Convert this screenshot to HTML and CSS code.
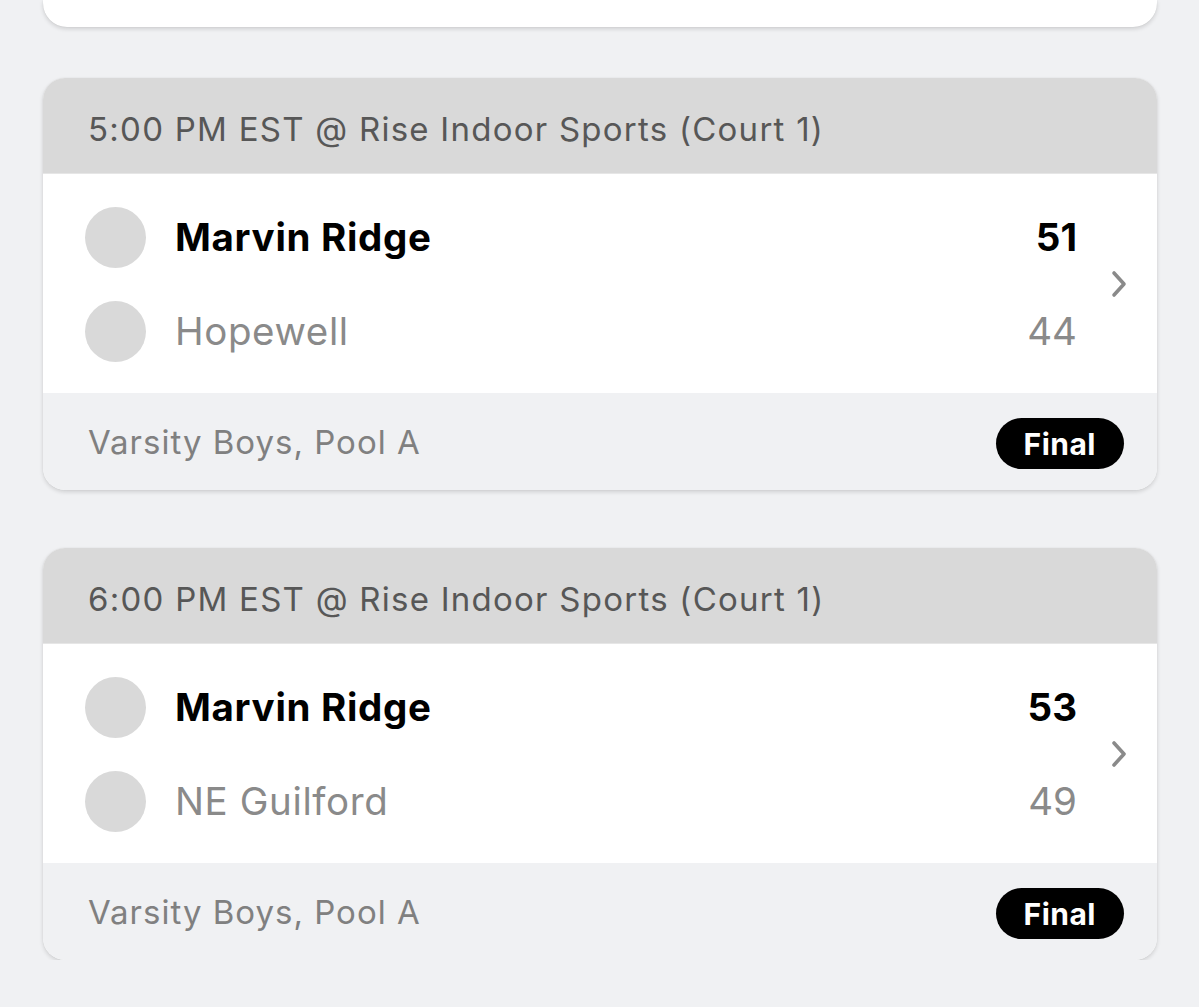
FILE: index.html
```html
<!DOCTYPE html>
<html>
<head>
<meta charset="utf-8">
<link rel="stylesheet" href="styles.css">
</head>
<body>
<div class="list">
  <div class="card card-prev"></div>

  <div class="card">
    <div class="card-head">5:00 PM EST @ Rise Indoor Sports (Court 1)</div>
    <div class="card-body">
      <div class="teams">
        <div class="team win">
          <span class="logo"></span>
          <span class="name">Marvin Ridge</span>
          <span class="score">51</span>
        </div>
        <div class="team">
          <span class="logo"></span>
          <span class="name">Hopewell</span>
          <span class="score">44</span>
        </div>
      </div>
      <svg class="chev" width="20" height="28" viewBox="0 0 20 28"><path d="M5 3 L15 14 L5 25" fill="none" stroke="#8a8a8a" stroke-width="3.6" stroke-linecap="round" stroke-linejoin="round"/></svg>
    </div>
    <div class="card-foot">
      <span class="division">Varsity Boys, Pool A</span>
      <span class="badge">Final</span>
    </div>
  </div>

  <div class="card">
    <div class="card-head">6:00 PM EST @ Rise Indoor Sports (Court 1)</div>
    <div class="card-body">
      <div class="teams">
        <div class="team win">
          <span class="logo"></span>
          <span class="name">Marvin Ridge</span>
          <span class="score">53</span>
        </div>
        <div class="team">
          <span class="logo"></span>
          <span class="name">NE Guilford</span>
          <span class="score">49</span>
        </div>
      </div>
      <svg class="chev" width="20" height="28" viewBox="0 0 20 28"><path d="M5 3 L15 14 L5 25" fill="none" stroke="#8a8a8a" stroke-width="3.6" stroke-linecap="round" stroke-linejoin="round"/></svg>
    </div>
    <div class="card-foot">
      <span class="division">Varsity Boys, Pool A</span>
      <span class="badge">Final</span>
    </div>
  </div>
</div>
</body>
</html>
```
FILE: styles.css
```css
html, body {
  margin: 0;
  padding: 0;
  background: #f0f1f3;
  font-family: "Inter", "Liberation Sans", sans-serif;
}

.list {
  display: flex;
  flex-direction: column;
  gap: 58px;
  padding: 0 42px 0 43px;
}

.card {
  background: #ffffff;
  border-radius: 22px;
  overflow: hidden;
  box-shadow: 0 2px 4px rgba(0, 0, 0, 0.14), 0 0 1px rgba(0, 0, 0, 0.12);
}

.card-prev {
  height: 27px;
  border-radius: 0 0 24px 24px;
  margin-bottom: -7px;
}

.card-head {
  background: #d9d9d9;
  height: 96px;
  box-sizing: border-box;
  padding: 6px 0 0 45px;
  border-bottom: 1px solid #e6e6e6;
  display: flex;
  align-items: center;
  font-size: 33px;
  letter-spacing: 1.25px;
  color: #575757;
}

.card-body {
  display: flex;
  align-items: center;
  padding: 16px 28px 15px 42px;
}

.teams {
  flex: 1;
  display: flex;
  flex-direction: column;
}

.team {
  display: flex;
  align-items: center;
  height: 94px;
  color: #8a8a8a;
  font-size: 38.5px;
  letter-spacing: 0.6px;
}

.team.win {
  color: #000000;
  font-weight: 700;
  letter-spacing: 0.7px;
}

.logo {
  width: 61px;
  height: 61px;
  border-radius: 50%;
  background: #d9d9d9;
  margin-right: 29px;
  flex: none;
}

.name {
  flex: 1;
}

.score {
  text-align: right;
  letter-spacing: 0;
}

.chev {
  margin-left: 32px;
  flex: none;
}

.card-foot {
  background: #f0f1f3;
  height: 97px;
  display: flex;
  align-items: center;
  justify-content: space-between;
  padding: 0 33px 0 45px;
}

.division {
  font-size: 33px;
  letter-spacing: 1px;
  color: #808080;
}

.badge {
  background: #000;
  color: #fff;
  font-weight: 700;
  font-size: 30px;
  letter-spacing: 0.5px;
  height: 51px;
  padding: 0 28px;
  margin-top: 4px;
  border-radius: 26px;
  display: flex;
  align-items: center;
}
```
